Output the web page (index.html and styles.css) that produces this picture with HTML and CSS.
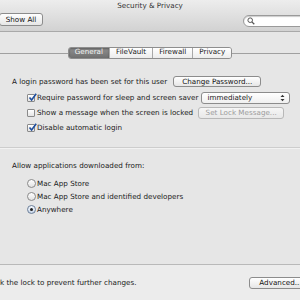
FILE: index.html
```html
<!DOCTYPE html>
<html lang="en">

<head>
    <meta charset="UTF-8">
    <title>Security &amp; Privacy</title>
    <link rel="stylesheet" href="styles.css">
</head>

<body>
    <header class="titlebar">
        <div class="title">Security &amp; Privacy</div>
        <div class="toolbar">
            <button class="btn show-all">Show All</button>
            <div class="search">
                <svg width="8" height="8" viewBox="0 0 8 8">
                    <circle cx="3.2" cy="3.2" r="2.3" fill="none" stroke="#555" stroke-width="1"/>
                    <line x1="4.9" y1="4.9" x2="7.3" y2="7.3" stroke="#555" stroke-width="1.3"/>
                </svg>
            </div>
        </div>
    </header>

    <main class="content">
        <div class="tabbar">
            <span class="tab-line"></span>
            <div class="tabs">
                <span class="tab active">General</span>
                <span class="tab">FileVault</span>
                <span class="tab">Firewall</span>
                <span class="tab">Privacy</span>
            </div>
            <span class="tab-line"></span>
        </div>

        <div class="login-row">
            <span>A login password has been set for this user</span>
            <button class="btn">Change Password...</button>
        </div>

        <div class="options">
            <div class="option">
                <span class="checkbox checked">
                    <svg width="9" height="9" viewBox="0 0 9 9"><path d="M1.5 4.5 L3.6 7 L8.2 0.8" fill="none" stroke="#1f4f9e" stroke-width="1.6"/></svg>
                </span>
                <span>Require password for sleep and screen saver</span>
                <div class="select">
                    <span>immediately</span>
                    <svg width="5" height="8" viewBox="0 0 5 8"><path d="M0.5 3 L2.5 0.8 L4.5 3 Z M0.5 5 L2.5 7.2 L4.5 5 Z" fill="#333"/></svg>
                </div>
            </div>
            <div class="option">
                <span class="checkbox"></span>
                <span>Show a message when the screen is locked</span>
                <button class="btn disabled">Set Lock Message...</button>
            </div>
            <div class="option">
                <span class="checkbox checked">
                    <svg width="9" height="9" viewBox="0 0 9 9"><path d="M1.5 4.5 L3.6 7 L8.2 0.8" fill="none" stroke="#1f4f9e" stroke-width="1.6"/></svg>
                </span>
                <span>Disable automatic login</span>
            </div>
        </div>

        <div class="separator"></div>

        <p class="allow">Allow applications downloaded from:</p>
        <div class="radios">
            <div class="option radio-row"><span class="radio"></span><span>Mac App Store</span></div>
            <div class="option radio-row"><span class="radio"></span><span>Mac App Store and identified developers</span></div>
            <div class="option radio-row"><span class="radio selected"></span><span>Anywhere</span></div>
        </div>
    </main>

    <footer class="footer">
        <span class="lock-hint">Click the lock to prevent further changes.</span>
        <button class="btn advanced">Advanced...</button>
    </footer>
</body>

</html>
```

FILE: styles.css
```css
* {
    margin: 0;
    padding: 0;
    box-sizing: border-box;
}

body {
    width: 300px;
    height: 300px;
    overflow: hidden;
    font-family: "DejaVu Sans", sans-serif;
    font-size: 7.2px;
    line-height: 10px;
    color: #1a1a1a;
    background-color: #e6e6e6;
}

.titlebar {
    height: 32px;
    background: linear-gradient(#ededed, #d2d2d2);
    border-bottom: 1px solid #a9a9a9;
}

.title {
    height: 12px;
    line-height: 12px;
    text-align: center;
    color: #333;
}

.toolbar {
    display: flex;
    align-items: flex-start;
}

.btn {
    font-family: inherit;
    font-size: inherit;
    color: #111;
    background: linear-gradient(#ffffff, #e6e6e6);
    border: 1px solid #8c8c8c;
    border-radius: 3px;
    padding: 0 6px;
    height: 11px;
    line-height: 9px;
}

.show-all {
    height: 13px;
    line-height: 11px;
    margin-top: 1px;
    margin-left: -1px;
    width: 44px;
    padding: 0;
}

.search {
    margin-left: auto;
    margin-right: -20px;
    margin-top: 3px;
    width: 77px;
    height: 12px;
    background-color: #fff;
    border: 1px solid #9a9a9a;
    border-radius: 6px;
    box-shadow: inset 0 1px 1px rgba(0, 0, 0, 0.2);
    display: flex;
    align-items: center;
    padding-left: 3px;
}

.content {
    height: 232px;
    padding-top: 15px;
}

.tabbar {
    display: flex;
    align-items: center;
}

.tab-line {
    flex: 1;
    height: 1px;
    background-color: #a0a0a0;
}

.tabs {
    display: flex;
    border: 1px solid #8e8e8e;
    border-radius: 3px;
    overflow: hidden;
}

.tab {
    height: 10px;
    line-height: 8px;
    padding: 0 6px;
    background: linear-gradient(#ffffff, #ececec);
    border-left: 1px solid #a8a8a8;
    color: #222;
}

.tab:first-child {
    border-left: none;
}

.tab.active {
    background: linear-gradient(#8f8f8f, #707070);
    color: #f4f4f4;
    box-shadow: inset 0 1px 2px rgba(0, 0, 0, 0.35);
}

.login-row {
    display: flex;
    align-items: center;
    gap: 6px;
    margin-top: 17px;
    padding-left: 12px;
}

.login-row .btn {
    padding: 0 8px;
}

.options {
    margin-top: 3px;
    padding-left: 27px;
}

.option {
    display: flex;
    align-items: center;
    height: 15px;
}

.checkbox {
    width: 8px;
    height: 8px;
    margin-right: 2px;
    border: 1px solid #8a8a8a;
    border-radius: 1px;
    background: linear-gradient(#ffffff, #e4e4e4);
    position: relative;
}

.checkbox svg {
    position: absolute;
    left: 0;
    top: -2px;
}

.select {
    margin-left: 3px;
    width: 89px;
    height: 12px;
    display: flex;
    align-items: center;
    justify-content: space-between;
    padding: 0 4px 0 5px;
    background: linear-gradient(#ffffff, #f0f0f0);
    border: 1px solid #8c8c8c;
    border-radius: 3px;
}

.btn.disabled {
    margin-left: 5px;
    height: 12px;
    width: 86px;
    color: #9c9c9c;
    border-color: #b8b8b8;
    background: linear-gradient(#f6f6f6, #e8e8e8);
}

.separator {
    margin-top: 12px;
    height: 2px;
    border-top: 1px solid #cdcdcd;
    border-bottom: 1px solid #f2f2f2;
}

.allow {
    margin-top: 12px;
    padding-left: 12px;
    height: 10px;
    line-height: 10px;
}

.radios {
    margin-top: 6px;
    padding-left: 27px;
}

.radio-row {
    height: 13px;
}

.radio {
    width: 9px;
    height: 9px;
    margin-right: 1px;
    border: 1px solid #8a8a8a;
    border-radius: 50%;
    background: linear-gradient(#ffffff, #e2e2e2);
    display: flex;
    align-items: center;
    justify-content: center;
}

.radio.selected {
    border-color: #6c7f99;
    background: linear-gradient(#f4f8fd, #c7d5e8);
}

.radio.selected::after {
    content: "";
    width: 3px;
    height: 3px;
    border-radius: 50%;
    background-color: #202020;
}

.footer {
    height: 36px;
    background-color: #ececec;
    border-top: 1px solid #b9b9b9;
    display: flex;
    align-items: center;
}

.lock-hint {
    margin-left: -13px;
}

.advanced {
    margin-left: auto;
    margin-right: -12px;
    width: 63px;
    height: 12px;
    padding: 0;
}
```
